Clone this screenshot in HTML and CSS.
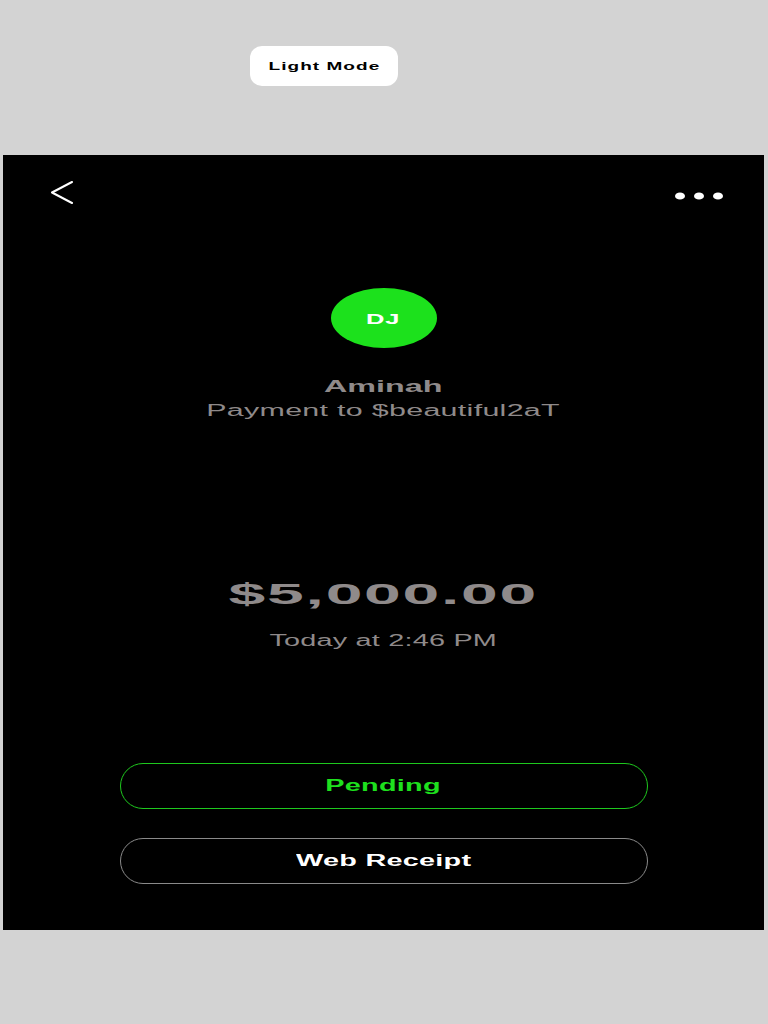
FILE: index.html
```html
<!DOCTYPE html>
<html>
<head>
<meta charset="utf-8">
<link rel="stylesheet" href="styles.css">
</head>
<body>
<div class="top">
  <button class="mode-btn"><span class="wide t-mode">Light Mode</span></button>
</div>
<div class="panel">
  <div class="topbar">
    <svg class="back" width="24" height="24" viewBox="0 0 24 24"><polyline points="22,1 2,11.5 22,22" fill="none" stroke="#fff" stroke-width="2" stroke-linecap="round" stroke-linejoin="round"/></svg>
    <svg class="more" width="56" height="10" viewBox="0 0 56 10"><ellipse cx="10" cy="5" rx="5" ry="3.6" fill="#fff"/><ellipse cx="29" cy="5" rx="5" ry="3.6" fill="#fff"/><ellipse cx="48" cy="5" rx="5" ry="3.6" fill="#fff"/></svg>
  </div>
  <div class="avatar"><span class="wide t-dj">DJ</span></div>
  <div class="name"><span class="wide t-name">Aminah</span></div>
  <div class="sub"><span class="wide t-sub">Payment to $beautiful2aT</span></div>
  <div class="amount"><span class="wide t-amount">$5,000.00</span></div>
  <div class="time"><span class="wide t-time">Today at 2:46 PM</span></div>
  <div class="pill pill-pending"><span class="wide t-pill">Pending</span></div>
  <div class="pill pill-receipt"><span class="wide t-pill">Web Receipt</span></div>
</div>
</body>
</html>
```

FILE: styles.css
```css
* { box-sizing: border-box; }
html, body { margin: 0; padding: 0; }
body {
  background: #d3d3d3;
  font-family: "Liberation Sans", Arial, sans-serif;
  width: 768px;
  height: 1024px;
  overflow: hidden;
}
.wide {
  display: inline-block;
  transform: scaleX(1.9);
  transform-origin: center;
  white-space: nowrap;
}
.top {
  padding: 46px 0 0 250px;
  height: 86px;
}
.mode-btn {
  width: 148px;
  height: 40px;
  border: none;
  border-radius: 12px;
  background: #fff;
  display: flex;
  align-items: center;
  justify-content: center;
  padding: 0;
  font-family: "Liberation Sans", Arial, sans-serif;
}
.t-mode {
  font-size: 10px;
  font-weight: 700;
  color: #000;
  letter-spacing: 0.55px;
}
.panel {
  margin: 69px 4px 0 3px;
  height: 775px;
  background: #000;
  display: flex;
  flex-direction: column;
  align-items: center;
}
.topbar {
  align-self: stretch;
  display: flex;
  justify-content: space-between;
  align-items: flex-start;
  padding: 26px 38px 0 47px;
}
.back { display: block; }
.more { display: block; margin-top: 10px; }
.avatar {
  margin-top: 83px;
  width: 106px;
  height: 60px;
  border-radius: 50%;
  background: #1ce11c;
  display: flex;
  align-items: center;
  justify-content: center;
}
.t-dj {
  color: #fff;
  font-size: 15px;
  font-weight: 700;
  letter-spacing: 0.5px;
  transform: scaleX(1.7);
}
.name {
  margin-top: 29px;
  line-height: 20px;
  height: 20px;
}
.t-name {
  font-size: 17px;
  font-weight: 700;
  color: #8f8a8a;
  letter-spacing: 0;
}
.sub {
  margin-top: 4px;
  line-height: 20px;
  height: 20px;
}
.t-sub {
  font-size: 16px;
  color: #8f8a8a;
  letter-spacing: 0.16px;
}
.amount {
  margin-top: 155px;
  line-height: 36px;
  height: 36px;
}
.t-amount {
  font-size: 30px;
  font-weight: 700;
  color: #8f8a8a;
  letter-spacing: 0.8px;
  transform: scaleX(2.2);
}
.time {
  margin-top: 19px;
  line-height: 20px;
  height: 20px;
}
.t-time {
  font-size: 16px;
  color: #8f8a8a;
  letter-spacing: 0.12px;
  transform: scaleX(1.8);
}
.pill {
  width: 528px;
  height: 46px;
  border-radius: 23px;
  display: flex;
  align-items: center;
  justify-content: center;
}
.pill-pending {
  margin-top: 112px;
  border: 1.5px solid #1ec81e;
  color: #1ee01e;
}
.pill-receipt {
  margin-top: 29px;
  border: 1.5px solid #8a8a8a;
  color: #fff;
}
.t-pill {
  font-size: 16px;
  font-weight: 700;
  letter-spacing: 0.15px;
  transform: scaleX(1.8);
}
```
